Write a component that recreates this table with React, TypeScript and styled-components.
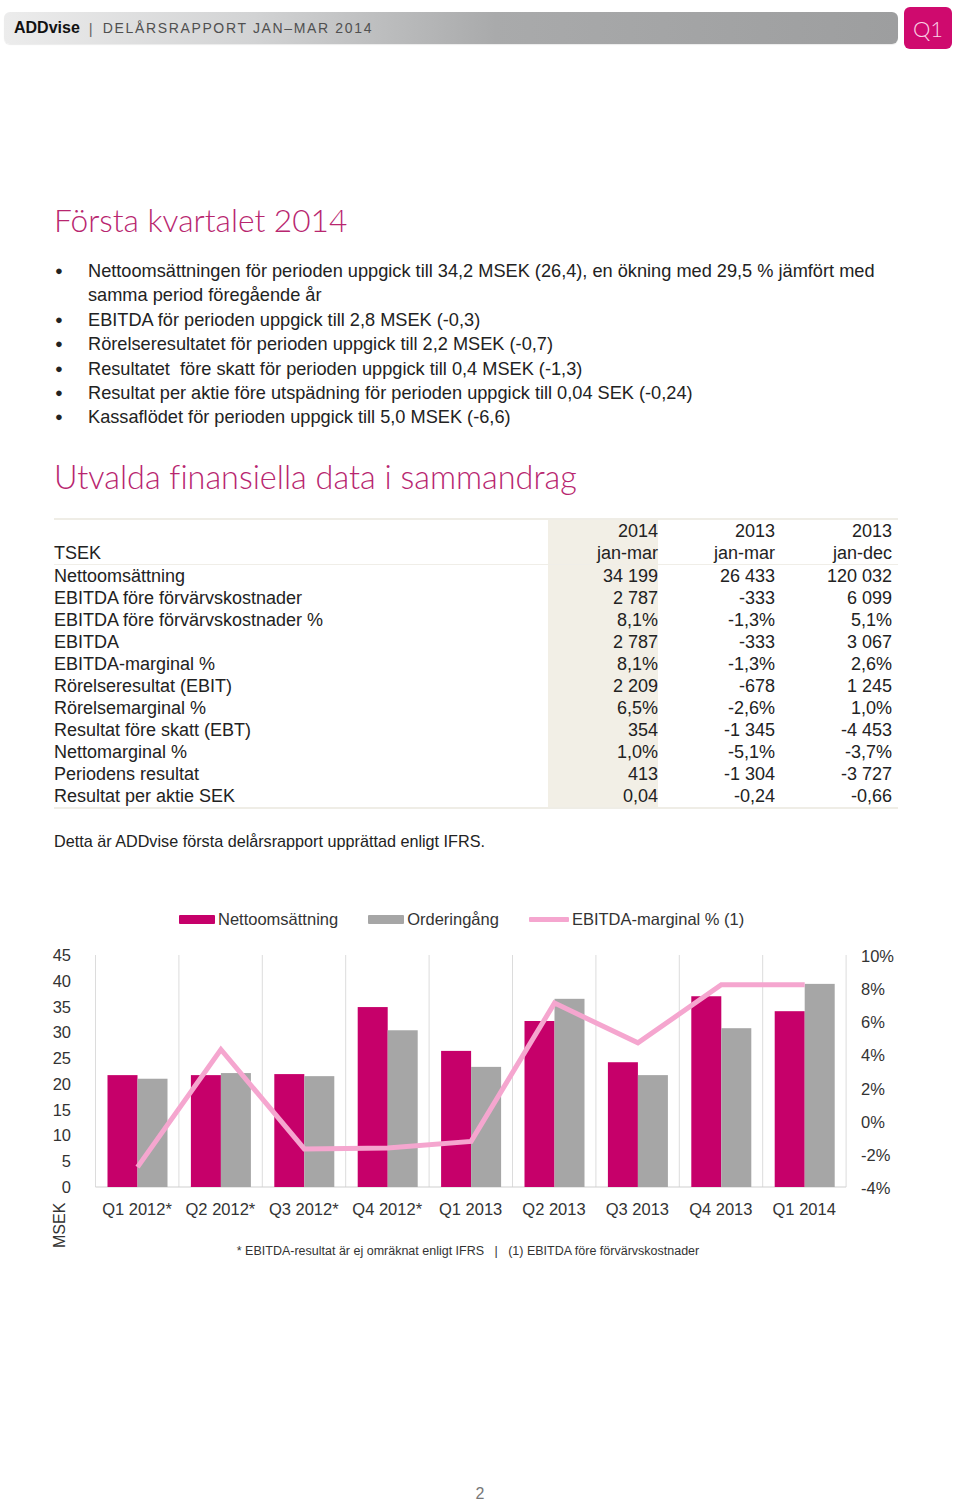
import React from "react";
import styled, { createGlobalStyle } from "styled-components";

const GlobalStyle = createGlobalStyle`
  html, body { margin: 0; padding: 0; background: #ffffff; }
  body { font-family: "Liberation Sans", Arial, sans-serif; color: #222; }
`;

const Page = styled.div`
  width: 960px;
  height: 1500px;
  position: relative;
  background: #fff;
  display: flex;
  flex-direction: column;
`;

const HeaderRow = styled.header`
  display: flex;
  align-items: center;
  height: 42px;
  padding: 7px 8px 0 4px;
`;

const HeaderBar = styled.div`
  flex: 1;
  height: 32px;
  border-radius: 6px;
  background: linear-gradient(90deg, #ececec 0%, #d2d3d4 28%, #a9aaab 55%, #9d9e9f 100%);
  display: flex;
  align-items: center;
  padding-left: 10px;
  box-shadow: 0 1px 1px rgba(0,0,0,0.08);
`;

const Brand = styled.span`
  font-family: "Liberation Sans", Arial, sans-serif;
  font-weight: 700;
  font-size: 16px;
  color: #111;
`;

const Divider = styled.span`
  color: #666;
  font-size: 15px;
  margin: 0 10px 0 9px;
`;

const HeaderTitle = styled.span`
  font-family: "Liberation Sans", Arial, sans-serif;
  font-size: 14px;
  letter-spacing: 1.65px;
  color: #505050;
`;

const QuarterBadge = styled.div`
  width: 48px;
  height: 42px;
  margin-left: 6px;
  border-radius: 6px;
  background: #cf0a6e;
  color: #fbd3e6;
  display: flex;
  align-items: center;
  justify-content: center;
  font-family: Lato, "Liberation Sans", sans-serif;
  font-weight: 300;
  font-size: 22px;
`;

const Content = styled.main`
  padding: 0 62px 0 54px;
  display: flex;
  flex-direction: column;
`;

const Heading = styled.h1<{ $top: number; $size: number }>`
  margin: ${(p) => p.$top}px 0 0 0;
  font-family: Lato, "Liberation Sans", sans-serif;
  font-weight: 300;
  font-size: ${(p) => p.$size}px;
  line-height: 40px;
  font-variant-ligatures: none;
  color: #b8266f;
`;

const BulletList = styled.ul`
  list-style: none;
  margin: 19px 0 0 0;
  padding: 0;
`;

const BulletItem = styled.li`
  display: flex;
  font-size: 18.2px;
  line-height: 24.4px;
  color: #222;
  white-space: pre-wrap;
`;

const Dot = styled.span`
  width: 33px;
  flex: none;
  padding-left: 1px;
  font-size: 13px;
`;

const Table = styled.table`
  margin-top: 21px;
  width: 844px;
  border-collapse: collapse;
  border-top: 2px solid #efede6;
  border-bottom: 2px solid #efede6;
  font-size: 18px;
  color: #222;
`;

const Row = styled.tr<{ $line?: boolean }>`
  height: 22px;
  border-bottom: ${(p) => (p.$line ? "1px solid #f0eee8" : "none")};
`;

const LabelCell = styled.td`
  padding: 0;
  line-height: 22px;
  text-align: left;
  white-space: nowrap;
`;

const NumCell = styled.td<{ $hl?: boolean; $w: number; $pad?: number }>`
  width: ${(p) => p.$w}px;
  padding: 0 ${(p) => p.$pad ?? 0}px 0 0;
  line-height: 22px;
  text-align: right;
  white-space: nowrap;
  background: ${(p) => (p.$hl ? "#f2efe6" : "transparent")};
`;

const Note = styled.p`
  margin: 21px 0 0 0;
  font-size: 16.2px;
  line-height: 22px;
  color: #222;
`;

const ChartSection = styled.section`
  display: flex;
  flex-direction: column;
  margin-top: 57px;
`;

const Legend = styled.div`
  display: flex;
  align-items: center;
  padding-left: 179px;
  height: 22px;
  font-size: 16.5px;
  color: #333;
`;

const LegendItem = styled.div<{ $gap: number }>`
  display: flex;
  align-items: center;
  margin-right: ${(p) => p.$gap}px;
`;

const Swatch = styled.span<{ $color: string; $h: number; $w: number }>`
  display: inline-block;
  width: ${(p) => p.$w}px;
  height: ${(p) => p.$h}px;
  background: ${(p) => p.$color};
  margin-right: 3px;
  border-radius: 1px;
`;

const ChartSvg = styled.svg`
  display: block;
  overflow: visible;
  margin-top: 4px;
  font-family: "Liberation Sans", Arial, sans-serif;
`;

const Footnote = styled.p`
  margin: 8px 0 0 0;
  text-align: center;
  padding-right: 24px;
  font-size: 12.5px;
  line-height: 16px;
  color: #333;
  white-space: pre;
`;

const PageNumber = styled.div`
  margin-top: auto;
  height: 14px;
  text-align: center;
  font-size: 16px;
  color: #777;
  line-height: 16px;
`;

const bullets = [
  "Nettoomsättningen för perioden uppgick till 34,2 MSEK (26,4), en ökning med 29,5 % jämfört med samma period föregående år",
  "EBITDA för perioden uppgick till 2,8 MSEK (-0,3)",
  "Rörelseresultatet för perioden uppgick till 2,2 MSEK (-0,7)",
  "Resultatet  före skatt för perioden uppgick till 0,4 MSEK (-1,3)",
  "Resultat per aktie före utspädning för perioden uppgick till 0,04 SEK (-0,24)",
  "Kassaflödet för perioden uppgick till 5,0 MSEK (-6,6)",
];

const rows: [string, string, string, string][] = [
  ["Nettoomsättning", "34 199", "26 433", "120 032"],
  ["EBITDA före förvärvskostnader", "2 787", "-333", "6 099"],
  ["EBITDA före förvärvskostnader %", "8,1%", "-1,3%", "5,1%"],
  ["EBITDA", "2 787", "-333", "3 067"],
  ["EBITDA-marginal %", "8,1%", "-1,3%", "2,6%"],
  ["Rörelseresultat (EBIT)", "2 209", "-678", "1 245"],
  ["Rörelsemarginal %", "6,5%", "-2,6%", "1,0%"],
  ["Resultat före skatt (EBT)", "354", "-1 345", "-4 453"],
  ["Nettomarginal %", "1,0%", "-5,1%", "-3,7%"],
  ["Periodens resultat", "413", "-1 304", "-3 727"],
  ["Resultat per aktie SEK", "0,04", "-0,24", "-0,66"],
];

const categories = ["Q1 2012*", "Q2 2012*", "Q3 2012*", "Q4 2012*", "Q1 2013", "Q2 2013", "Q3 2013", "Q4 2013", "Q1 2014"];
const netSales = [21.7, 21.7, 21.9, 34.9, 26.4, 32.2, 24.2, 37.0, 34.1];
const orders = [21.0, 22.1, 21.5, 30.4, 23.3, 36.5, 21.7, 30.8, 39.4];
const margin = [-2.8, 4.3, -1.7, -1.65, -1.25, 7.1, 4.7, 8.2, 8.2];

// svg origin at page y = 935
const OY = 935;
const BASE = 1187 - OY;
const TOP = 955 - OY;
const PLOT_H = BASE - TOP;
const X0 = 95.5;
const CW = 83.4;
const yL = (v: number) => BASE - (v / 45) * PLOT_H;
const yR = (p: number) => BASE - ((p + 4) / 14) * PLOT_H;

const Chart: React.FC = () => {
  const linePts = margin
    .map((m, i) => `${(X0 + CW * i + 42).toFixed(1)},${yR(m).toFixed(1)}`)
    .join(" ");
  return (
    <ChartSvg width={960} height={300} viewBox="0 0 960 300">
      {Array.from({ length: 10 }).map((_, i) => (
        <line key={i} x1={X0 + CW * i} x2={X0 + CW * i} y1={TOP} y2={BASE} stroke="#dcdcdc" strokeWidth={1} />
      ))}
      <line x1={X0} x2={X0 + CW * 9} y1={BASE} y2={BASE} stroke="#cfcfcf" strokeWidth={1} />
      {netSales.map((v, i) => (
        <rect key={"n" + i} x={X0 + CW * i + 12} y={yL(v)} width={30} height={BASE - yL(v)} fill="#c6006a" />
      ))}
      {orders.map((v, i) => (
        <rect key={"o" + i} x={X0 + CW * i + 42} y={yL(v)} width={30} height={BASE - yL(v)} fill="#a6a6a6" />
      ))}
      <polyline points={linePts} fill="none" stroke="#f5a6cf" strokeWidth={5} strokeLinejoin="miter" />
      {[0, 5, 10, 15, 20, 25, 30, 35, 40, 45].map((v) => (
        <text key={v} x={71} y={yL(v) + 6} fontSize={16.5} fill="#333" textAnchor="end">
          {v}
        </text>
      ))}
      {[-4, -2, 0, 2, 4, 6, 8, 10].map((p) => (
        <text key={p} x={861} y={yR(p) + 7} fontSize={16.5} fill="#333" textAnchor="start">
          {p + "%"}
        </text>
      ))}
      {categories.map((c, i) => (
        <text key={c} x={X0 + CW * i + 41.5} y={1215 - OY} fontSize={16.5} fill="#333" textAnchor="middle">
          {c}
        </text>
      ))}
      <text x={0} y={0} fontSize={16} fill="#333" transform={`translate(65 ${1248 - OY}) rotate(-90)`}>
        MSEK
      </text>
    </ChartSvg>
  );
};

export default function App() {
  return (
    <Page>
      <GlobalStyle />
      <HeaderRow>
        <HeaderBar>
          <Brand>ADDvise</Brand>
          <Divider>|</Divider>
          <HeaderTitle>DELÅRSRAPPORT JAN–MAR 2014</HeaderTitle>
        </HeaderBar>
        <QuarterBadge>Q1</QuarterBadge>
      </HeaderRow>
      <Content>
        <Heading $top={151} $size={31.7}>Första kvartalet 2014</Heading>
        <BulletList>
          {bullets.map((b, i) => (
            <BulletItem key={i}>
              <Dot>●</Dot>
              <span>{b}</span>
            </BulletItem>
          ))}
        </BulletList>
        <Heading $top={27} $size={32.4}>Utvalda finansiella data i sammandrag</Heading>
        <Table>
          <tbody>
            <Row>
              <LabelCell />
              <NumCell $hl $w={110}>2014</NumCell>
              <NumCell $w={117}>2013</NumCell>
              <NumCell $w={117} $pad={6}>2013</NumCell>
            </Row>
            <Row $line>
              <LabelCell>TSEK</LabelCell>
              <NumCell $hl $w={110}>jan-mar</NumCell>
              <NumCell $w={117}>jan-mar</NumCell>
              <NumCell $w={117} $pad={6}>jan-dec</NumCell>
            </Row>
            {rows.map((r) => (
              <Row key={r[0]}>
                <LabelCell>{r[0]}</LabelCell>
                <NumCell $hl $w={110}>{r[1]}</NumCell>
                <NumCell $w={117}>{r[2]}</NumCell>
                <NumCell $w={117} $pad={6}>{r[3]}</NumCell>
              </Row>
            ))}
          </tbody>
        </Table>
        <Note>Detta är ADDvise första delårsrapport upprättad enligt IFRS.</Note>
      </Content>
      <ChartSection>
        <Legend>
          <LegendItem $gap={30}>
            <Swatch $color="#c6006a" $w={36} $h={9} />
            Nettoomsättning
          </LegendItem>
          <LegendItem $gap={30}>
            <Swatch $color="#a6a6a6" $w={36} $h={9} />
            Orderingång
          </LegendItem>
          <LegendItem $gap={0}>
            <Swatch $color="#f5a6cf" $w={40} $h={5} />
            EBITDA-marginal % (1)
          </LegendItem>
        </Legend>
        <Chart />
        <Footnote>{"* EBITDA-resultat är ej omräknat enligt IFRS   |   (1) EBITDA före förvärvskostnader"}</Footnote>
      </ChartSection>
      <PageNumber>2</PageNumber>
    </Page>
  );
}
